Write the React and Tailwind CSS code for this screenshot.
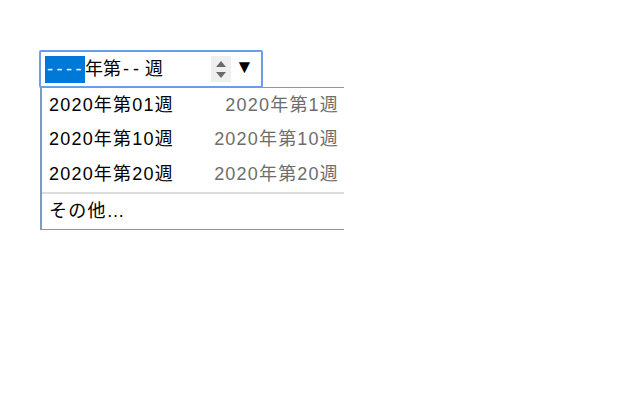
import React from 'react'

const weeks = [
  { label: '2020年第01週', hint: '2020年第1週' },
  { label: '2020年第10週', hint: '2020年第10週' },
  { label: '2020年第20週', hint: '2020年第20週' },
]

function Spinner() {
  return (
    <div className="flex h-[26px] w-[20px] flex-col items-center justify-center gap-[5px] bg-[#efefef]">
      <svg width="10" height="6" viewBox="0 0 10 6">
        <path d="M5 0 L10 6 L0 6 Z" fill="#6b6b6b" />
      </svg>
      <svg width="10" height="6" viewBox="0 0 10 6">
        <path d="M0 0 L10 0 L5 6 Z" fill="#6b6b6b" />
      </svg>
    </div>
  )
}

export default function App() {
  return (
    <div
      className="relative h-[405px] w-[630px] bg-white text-[18px] tracking-[1.2px] text-black"
      style={{ fontFamily: '"Liberation Sans", "Noto Sans CJK JP", sans-serif' }}
    >
      <div className="pl-[39px] pt-[50px]">
        <div className="flex h-[38px] w-[224px] items-center whitespace-nowrap rounded-[2px] border-2 border-[#6c9de9] pl-[4px] tracking-normal">
          <span className="flex h-[27px] w-[40px] shrink-0 items-center overflow-hidden bg-[#0078d7] pl-[2px] tracking-[3.5px] text-white">----</span>
          <span>年第</span>
          <span className="pl-[2px] pr-[2px] tracking-[4px]">--</span>
          <span>週</span>
          <div className="ml-auto mr-[30px]">
            <Spinner />
          </div>
        </div>
        <span className="absolute left-[235px] top-[57px] text-[19px] leading-none tracking-normal">▼</span>
      </div>

      <div className="absolute left-[40px] top-[87px] w-[304px] border-y border-l-2 border-[#7d9abf] bg-white">
        {weeks.map((w) => (
          <div key={w.label} className="flex h-[34.5px] items-center justify-between whitespace-nowrap pl-[7px] pr-[5px]">
            <span>{w.label}</span>
            <span className="text-[#6d6d6d]">{w.hint}</span>
          </div>
        ))}
        <div className="h-[2px] bg-[#dcdcdc]" />
        <div className="flex h-[35px] items-center pl-[7px]">その他…</div>
      </div>
    </div>
  )
}
